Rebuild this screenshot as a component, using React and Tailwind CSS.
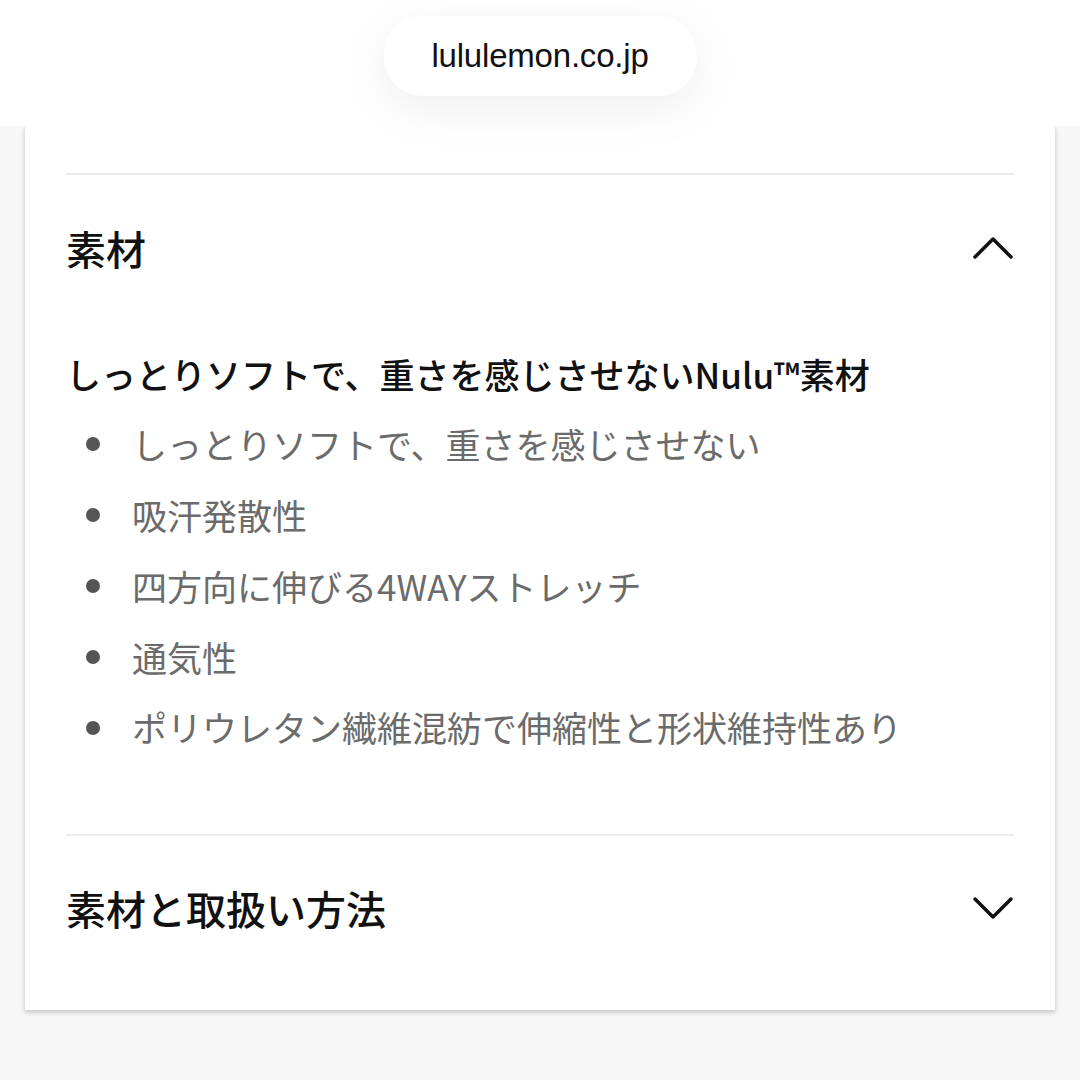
import React from 'react';

const items = [
  'しっとりソフトで、重さを感じさせない',
  '吸汗発散性',
  '四方向に伸びる4WAYストレッチ',
  '通気性',
  'ポリウレタン繊維混紡で伸縮性と形状維持性あり',
];

function Chevron({ up }) {
  return (
    <svg width="42" height="26" viewBox="0 0 42 26" fill="none" className="shrink-0">
      <polyline
        points={up ? '3,22 21,4 39,22' : '3,4 21,22 39,4'}
        stroke="#111"
        strokeWidth="3.5"
        strokeLinecap="round"
        strokeLinejoin="round"
      />
    </svg>
  );
}

export default function App() {
  const jp = { fontFamily: '"Noto Sans CJK JP", "Noto Sans", sans-serif' };
  return (
    <div className="min-h-screen bg-[#f7f7f7]" style={jp}>
      <div className="relative z-10 h-[126px] bg-white flex justify-center">
        <div className="mt-4 h-20 w-[313px] rounded-[38px] bg-white shadow-[0_12px_50px_rgba(0,0,0,0.07)] flex items-center justify-center">
          <span className="text-[33px] text-[#111] font-['Liberation_Sans',sans-serif] tracking-[-0.2px]">lululemon.co.jp</span>
        </div>
      </div>

      <div className="mx-[25px] bg-white px-[41px] pt-[47px] pb-[30px] shadow-[0_2px_5px_rgba(0,0,0,0.22)]">
        <div className="border-t-2 border-[#ebebeb]" />
        <div className="h-[146px] flex items-center justify-between">
          <h2 className="text-[40px] font-medium text-[#111] leading-none">素材</h2>
          <Chevron up />
        </div>

        <div className="pt-[17px] pb-[71px]">
          <p className="text-[35px] font-medium text-[#111] leading-[71px] whitespace-nowrap">
            しっとりソフトで、重さを感じさせないNulu™素材
          </p>
          <ul>
            {items.map((t) => (
              <li key={t} className="flex items-center h-[70.8px]">
                <span className="w-[14px] h-[14px] rounded-full bg-[#555] ml-[20px] mr-[32px] shrink-0" />
                <span className="text-[35px] text-[#6b6b6b] whitespace-nowrap">{t}</span>
              </li>
            ))}
          </ul>
        </div>

        <div className="border-t-2 border-[#ebebeb]" />
        <div className="h-[144px] flex items-center justify-between">
          <h2 className="text-[40px] font-medium text-[#111] leading-none">素材と取扱い方法</h2>
          <Chevron />
        </div>
      </div>
    </div>
  );
}
